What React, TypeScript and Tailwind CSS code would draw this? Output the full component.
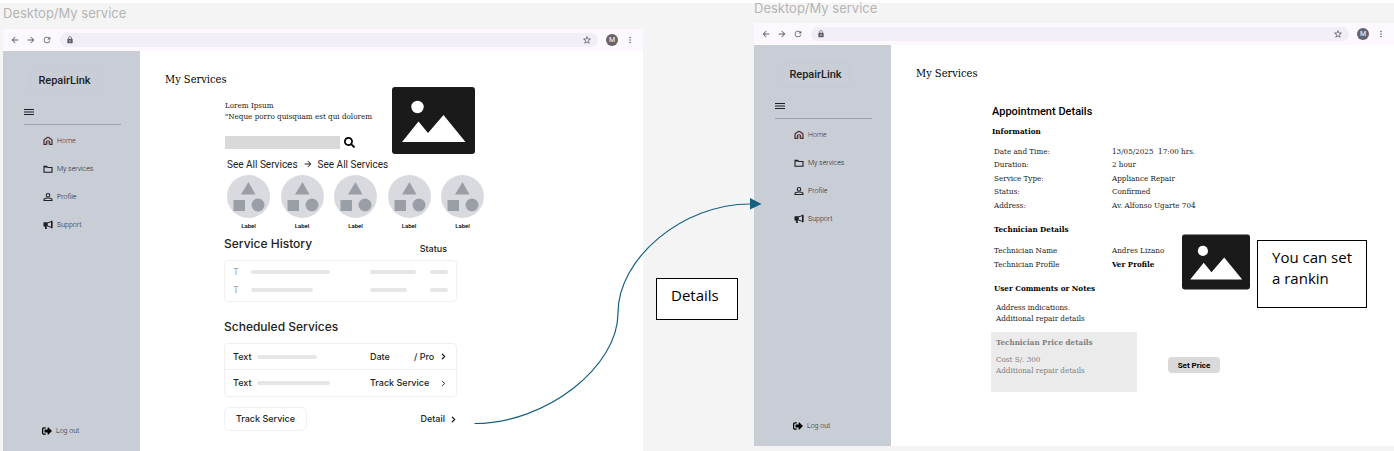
import type { ReactNode } from "react";
import {
  MdArrowBack,
  MdArrowForward,
  MdRefresh,
  MdLock,
  MdStarOutline,
  MdMoreVert,
} from "react-icons/md";
import { FaSearch, FaSignOutAlt } from "react-icons/fa";
import { ChevronRight } from "lucide-react";

function HomeIcon() {
  return (
    <svg viewBox="0 0 20 20" className="size-[10px]" fill="none" stroke="currentColor" strokeWidth="2.400">
      <path d="M2 17V8.500Q2 7.500 3 6.800L8.800 3Q10 2.200 11.200 3L17 6.800Q18 7.500 18 8.500V17h-4.500v-4a3.500 3.500 0 0 0-7 0v4z" />
      <path d="M10 12v5" strokeWidth="1.500" />
    </svg>
  );
}

function FolderIcon() {
  return (
    <svg viewBox="0 0 20 20" className="size-[10px]" fill="none" stroke="currentColor" strokeWidth="2.200">
      <path d="M2 16.500v-12h5.500L9.500 7H18v9.500z" />
      <path d="M2 5.500h6" strokeWidth="3" />
    </svg>
  );
}

function PersonIcon() {
  return (
    <svg viewBox="0 0 20 20" className="size-[10px]" fill="none" stroke="currentColor" strokeWidth="2.200">
      <circle cx="10" cy="6.500" r="3.500" />
      <path d="M2 17v-1.500C2 13 7 12 10 12s8 1 8 3.500V17z" />
    </svg>
  );
}

function MegaphoneIcon() {
  return (
    <svg viewBox="0 0 20 20" className="size-[10px]" fill="currentColor">
      <path d="M1 4.500h8.500v8.500H7l1 5H4.500l-1-5H1z" />
      <path d="M9 5.700 17.500 3v12L9 12" fill="none" stroke="currentColor" strokeWidth="2" />
      <path d="M16 1.500h3v15h-3z" />
    </svg>
  );
}

function MenuIcon() {
  return (
    <svg viewBox="0 0 10 8" className="h-2 w-[10px]" fill="none" stroke="currentColor">
      <path d="M0 1.500h10M0 4h10M0 6.500h10" strokeWidth="1.100" />
    </svg>
  );
}

function Picture({ className }: { className: string }) {
  return (
    <svg viewBox="0 0 83 67" className={className} role="img" aria-label="Image placeholder">
      <rect width="83" height="67" rx="3" fill="#1a1a1a" />
      <circle cx="25.500" cy="20" r="6.200" fill="#fff" />
      <path d="M10 55 26.500 34.500 36 46 51.500 28 73.500 55z" fill="#fff" />
    </svg>
  );
}

function Shapes() {
  return (
    <svg viewBox="0 0 43 43" className="size-[43px]">
      <circle cx="21.500" cy="21.500" r="21.500" fill="#d9dadf" />
      <g fill="#9a9ea6">
        <path d="M21.500 7 28.500 19.500h-14.500z" />
        <rect x="6.500" y="25" width="11.500" height="11" />
        <circle cx="31" cy="30" r="6.500" />
      </g>
    </svg>
  );
}

function Toolbar() {
  return (
    <div className="flex h-[22px] items-center bg-[#fdf7ff] pr-2 pl-[7px] text-[#625d68]">
      <button aria-label="Back" className="mr-[6px]">
        <MdArrowBack className="size-[10px]" />
      </button>
      <button aria-label="Forward" className="mr-[6px]">
        <MdArrowForward className="size-[10px]" />
      </button>
      <button aria-label="Reload" className="mr-2">
        <MdRefresh className="size-[10px]" />
      </button>
      <div className="flex h-[14px] flex-1 items-center rounded-full bg-[#f2edf6] px-[6px]">
        <MdLock className="size-2" />
        <input aria-label="Address" className="h-3 min-w-0 flex-1 bg-transparent px-1 text-[8px] outline-none" />
        <MdStarOutline className="size-[10px]" />
      </div>
      <button
        aria-label="Account M"
        className="ml-2 flex size-3 items-center justify-center rounded-full bg-[#67626c] font-['Roboto',sans-serif] text-[7px] text-white"
      >
        M
      </button>
      <button aria-label="More" className="ml-[7px]">
        <MdMoreVert className="size-[10px]" />
      </button>
    </div>
  );
}

function NavLink({ icon, label, tone = "text-[#1d1e22]" }: { icon: ReactNode; label: string; tone?: string }) {
  return (
    <a href="#" className={`flex h-7 items-center gap-1 ${tone}`}>
      {icon}
      <span className="font-light">{label}</span>
    </a>
  );
}

function Sidebar() {
  return (
    <nav className="flex w-[137px] shrink-0 flex-col bg-[#c9cdd6] pt-[18px] pb-[6px] font-['Roboto',sans-serif] text-[7px] text-[#1d1e22]">
      <div className="ml-[27px] flex h-6 w-[69px] items-center justify-center rounded-sm border border-[#c6cad3] text-[11px] font-medium">
        RepairLink
      </div>
      <button aria-label="Menu" className="mt-[15px] ml-[21px] self-start">
        <MenuIcon />
      </button>
      <hr className="mt-2 mr-[19px] mb-[2px] ml-[21px] border-[#9fa3ab]" />
      <div className="ml-10">
        <NavLink icon={<HomeIcon />} label="Home" tone="text-[#4b2a2c]" />
        <NavLink icon={<FolderIcon />} label="My services" />
        <NavLink icon={<PersonIcon />} label="Profile" />
        <NavLink icon={<MegaphoneIcon />} label="Support" />
      </div>
      <div className="mt-auto ml-[39px]">
        <NavLink icon={<FaSignOutAlt className="size-[10px] text-black" />} label="Log out" />
      </div>
    </nav>
  );
}

function Frame({ children }: { children: ReactNode }) {
  return (
    <section className="flex min-w-0 flex-1 flex-col">
      <Toolbar />
      <div className="flex flex-1">
        <Sidebar />
        <main className="min-w-0 flex-1 bg-white pt-[22px] pl-[25px] text-black">
          <h1 className="font-['Roboto_Slab','DejaVu_Serif_Condensed','DejaVu_Serif',serif] text-[11px] leading-[14px]">
            My Services
          </h1>
          {children}
        </main>
      </div>
    </section>
  );
}

function FrameTitle({ children }: { children: ReactNode }) {
  return (
    <h2 className="font-['Inter',sans-serif] text-[13px] leading-4 whitespace-nowrap text-[#b5b5b5]">{children}</h2>
  );
}

function Bar({ className }: { className: string }) {
  return <span className={`block h-1 rounded-full bg-[#e6e6e6] ${className}`} />;
}

function HistoryRow({ first, second }: { first: string; second: string }) {
  return (
    <li className="grid h-[18px] grid-cols-[18px_119px_60px_18px] items-center">
      <span className="text-[#a3a3a3]">T</span>
      <Bar className={first} />
      <Bar className={second} />
      <Bar className="w-[18px]" />
    </li>
  );
}

function ServicesHome() {
  return (
    <div className="ml-[59px] w-[260px] font-['Inter',sans-serif] text-[9px] text-[#222]">
      <div className="flex pl-[1px]">
        <div className="w-[167px] pt-[13px]">
          <p className="font-['Roboto_Slab','DejaVu_Serif_Condensed','DejaVu_Serif',serif] text-[8px] leading-[11px] whitespace-nowrap">
            Lorem Ipsum
            <br />
            "Neque porro quisquam est qui dolorem
          </p>
          <div className="mt-[14px] flex items-center gap-1">
            <input aria-label="Search services" className="h-[13px] w-[115px] bg-[#d9d9d9] px-1 outline-none" />
            <button aria-label="Search">
              <FaSearch className="size-[11px] text-black" />
            </button>
          </div>
        </div>
        <Picture className="h-[67px] w-[83px]" />
      </div>

      <div className="mt-[1px] ml-[3px] flex h-[18px] items-center gap-[5px] font-['Roboto',sans-serif] text-[10px]">
        <a href="#">See All Services</a>
        <MdArrowForward className="size-[10px]" />
        <a href="#">See All Services</a>
      </div>

      <ul className="mt-[2px] ml-[3px] flex w-[257px] justify-between font-['Roboto',sans-serif]">
        {[0, 1, 2, 3, 4].map((i) => (
          <li key={i} className="flex flex-col items-center text-[6px] leading-4 font-medium text-black">
            <Shapes />
            Label
          </li>
        ))}
      </ul>

      <div className="mt-[2px] flex w-[223px] justify-between leading-4">
        <h3 className="text-[12px] font-medium">Service History</h3>
        <span className="pt-[5px] font-medium">Status</span>
      </div>
      <ul className="mt-[3px] w-[233px] rounded border border-[#f0f0f0] px-2 py-[2px]">
        <HistoryRow first="w-[79px]" second="w-[46px]" />
        <HistoryRow first="w-[62px]" second="w-[37px]" />
      </ul>

      <h3 className="mt-[17px] text-[12px] leading-4 font-medium">Scheduled Services</h3>
      <ul className="mt-2 w-[233px] rounded border border-[#f0f0f0] font-medium">
        <li className="flex h-[26px] items-center border-b border-[#f0f0f0] px-2">
          <span className="w-6">Text</span>
          <Bar className="w-[60px]" />
          <span className="ml-auto w-11">Date</span>
          <span className="w-[25px]">/ Pro</span>
          <ChevronRight className="size-[9px]" strokeWidth={3.5} />
        </li>
        <li className="flex h-[26px] items-center px-2">
          <span className="w-6">Text</span>
          <Bar className="w-[73px]" />
          <a href="#" className="ml-auto w-[69px]">
            Track Service
          </a>
          <ChevronRight className="size-[9px]" strokeWidth={2.5} />
        </li>
      </ul>

      <div className="mt-[10px] flex w-[234px] items-center justify-between font-medium">
        <button className="h-6 w-[83px] rounded-md border border-[#f0f0f0]">Track Service</button>
        <a href="#" className="flex items-center gap-1">
          Detail
          <ChevronRight className="size-[9px]" strokeWidth={3.5} />
        </a>
      </div>
    </div>
  );
}

function AppointmentDetails() {
  return (
    <div className="mt-[23px] ml-[75px] font-['Roboto_Slab','DejaVu_Serif_Condensed','DejaVu_Serif',serif] text-[8px] leading-[11px] text-[#222]">
      <div className="pl-[1px]">
        <h2 className="font-['Roboto',sans-serif] text-[11px] leading-4 font-medium text-black">Appointment Details</h2>
        <h3 className="mt-[6px] font-bold text-black">Information</h3>
      </div>
      <dl className="mt-2 ml-[3px] grid grid-cols-[118px_1fr] grid-rows-[13px_13px_14px_13px_14px] items-center">
        <dt>Date and Time:</dt>
        <dd className="whitespace-pre">13/05/2025  17:00 hrs.</dd>
        <dt>Duration:</dt>
        <dd>2 hour</dd>
        <dt>Service Type:</dt>
        <dd>Appliance Repair</dd>
        <dt>Status:</dt>
        <dd>Confirmed</dd>
        <dt>Address:</dt>
        <dd>Av. Alfonso Ugarte 704</dd>
      </dl>

      <div className="flex items-start pt-3">
        <div className="w-[191px] pl-[3px]">
          <h3 className="font-bold text-black">Technician Details</h3>
          <dl className="mt-2 grid auto-rows-[14px] grid-cols-[118px_1fr] items-center whitespace-nowrap">
            <dt>Technician Name</dt>
            <dd>Andres Lizano</dd>
            <dt>Technician Profile</dt>
            <dd>
              <a href="#" className="font-bold text-black">
                Ver Profile
              </a>
            </dd>
          </dl>
          <h3 className="mt-3 font-bold text-black">User Comments or Notes</h3>
          <p className="mt-2 pl-[2px]">
            Address indications.
            <br />
            Additional repair details
          </p>
        </div>
        <Picture className="mt-[10px] h-[56px] w-[68px]" />
        <p className="mt-4 ml-[7px] h-[68px] w-[110px] border border-black bg-white px-[14px] pt-[6px] font-['Open_Sans',sans-serif] text-[15px] leading-[21px] whitespace-nowrap text-black">
          You can set
          <br />a rankin
        </p>
      </div>

      <div className="flex items-center pt-2">
        <div className="h-[60px] w-[146px] bg-[#ebebeb] px-[5px] pt-[5px] text-[#808080]">
          <h3 className="font-bold">Technician Price details</h3>
          <p className="mt-[6px]">
            Cost S/. 300
            <br />
            Additional repair details
          </p>
        </div>
        <button className="mt-[6px] ml-[31px] h-4 w-[52px] rounded bg-[#d9d9d9] font-['Roboto',sans-serif] text-[8px] font-bold text-black">
          Set Price
        </button>
      </div>
    </div>
  );
}

export default function App() {
  return (
    <div className="relative flex min-h-screen border-t-[3px] border-white bg-[#f4f4f4] pl-[3px]">
      <div className="flex min-w-0 flex-1 flex-col pt-[2px]">
        <div className="mb-2">
          <FrameTitle>Desktop/My service</FrameTitle>
        </div>
        <Frame>
          <ServicesHome />
        </Frame>
      </div>

      <aside className="w-[111px] shrink-0 px-[13px] pt-[275px]">
        <p className="h-[42px] w-[82px] border border-black bg-white px-[14px] pt-[6px] font-['Open_Sans',sans-serif] text-[15px] leading-[21px] text-black">
          Details
        </p>
      </aside>

      <div className="flex min-w-0 flex-1 flex-col pb-[5px]">
        <div className="-mt-[3px] mb-[7px]">
          <FrameTitle>Desktop/My service</FrameTitle>
        </div>
        <Frame>
          <AppointmentDetails />
        </Frame>
      </div>

      <svg
        viewBox="0 3 1394 448"
        preserveAspectRatio="none"
        className="pointer-events-none absolute top-0 left-0 h-[448px] w-full"
        aria-hidden="true"
      >
        <path
          d="M474.500 423.500C546 423.500 618 367 618 313C618 258 683 204 750 204"
          fill="none"
          stroke="#156082"
          strokeWidth="1.200"
        />
        <path d="M750 198 761.500 204 750 209.500z" fill="#156082" />
      </svg>
    </div>
  );
}
